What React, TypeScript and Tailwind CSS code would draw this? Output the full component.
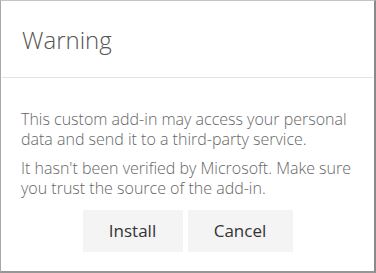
export default function App() {
  return (
    <div className="w-[376px] h-[273px] bg-white box-border border-t border-l border-r-2 border-b-2 border-t-[#c4c4c4] border-l-[#a8a8a8] border-r-[#8a8a8a] border-b-[#969696] flex flex-col" style={{ fontFamily: '"Open Sans", "Noto Sans", sans-serif' }}>
      <div className="h-[76px] flex items-start pl-[21px] pt-[25px]">
        <h1 className="text-[24px] font-light text-[#555] leading-[28px]">Warning</h1>
      </div>
      <div className="mx-px h-px bg-[#e3e3e3]" />
      <div className="pl-[20px] pr-[16px] pt-[31px] text-[16px] font-light leading-[20px] text-[#666]">
        <p>This custom add-in may access your personal data and send it to a third-party service.</p>
        <p className="mt-[9px]">It hasn't been verified by Microsoft. Make sure you trust the source of the add-in.</p>
      </div>
      <div className="flex justify-center gap-[5px] mt-[12px]">
        <button className="w-[100px] h-[42px] bg-[#f4f4f4] text-[17px] text-[#333]">Install</button>
        <button className="w-[105px] h-[42px] bg-[#f4f4f4] text-[17px] text-[#333]">Cancel</button>
      </div>
    </div>
  );
}
